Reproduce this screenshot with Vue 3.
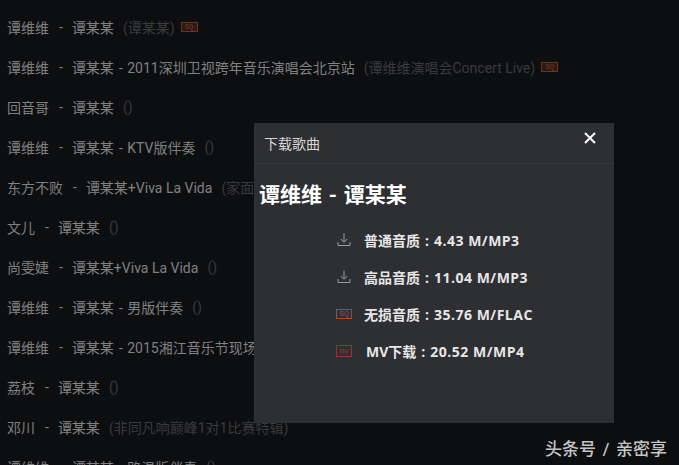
<script setup>
const rows = [
  { artist: '谭维维', title: '谭某某', album: '(谭某某)', badge: true },
  { artist: '谭维维', title: '谭某某', sub: '- 2011深圳卫视跨年音乐演唱会北京站', album: '(谭维维演唱会Concert Live)', badge: true },
  { artist: '回音哥', title: '谭某某', album: '()' },
  { artist: '谭维维', title: '谭某某', sub: '- KTV版伴奏', album: '()' },
  { artist: '东方不败', title: '谭某某+Viva La Vida', album: '(家面考古学家)' },
  { artist: '文儿', title: '谭某某', album: '()' },
  { artist: '尚雯婕', title: '谭某某+Viva La Vida', album: '()' },
  { artist: '谭维维', title: '谭某某', sub: '- 男版伴奏', album: '()' },
  { artist: '谭维维', title: '谭某某', sub: '- 2015湘江音乐节现场', album: '()' },
  { artist: '荔枝', title: '谭某某', album: '()' },
  { artist: '邓川', title: '谭某某', album: '(非同凡响巅峰1对1比赛特辑)' },
  { artist: '谭维维', title: '谭某某', sub: '- 路温版伴奏', album: '()' },
]
const options = [
  { icon: 'dl', name: '普通音质', value: '4.43 M/MP3' },
  { icon: 'dl', name: '高品音质', value: '11.04 M/MP3' },
  { icon: 'sq', name: '无损音质', value: '35.76 M/FLAC' },
  { icon: 'mv', name: 'MV下载', value: '20.52 M/MP4' },
]
</script>

<template>
  <div class="page">
    <ul class="list">
      <li v-for="(r, i) in rows" :key="i" class="row">
        <span class="artist">{{ r.artist }}</span>
        <span class="dash">-</span>
        <span class="title">{{ r.title }}</span>
        <span v-if="r.sub" class="sub">{{ r.sub }}</span>
        <span class="album">{{ r.album }}</span>
        <span v-if="r.badge" class="badge">SQ</span>
      </li>
    </ul>

    <section class="modal">
      <header class="modal-head">
        <span>下载歌曲</span>
        <svg class="close" width="12" height="12" viewBox="0 0 12 12">
          <path d="M1 1 11 11M11 1 1 11" stroke="#fff" stroke-width="2" fill="none" />
        </svg>
      </header>
      <h2 class="song">谭维维 - 谭某某</h2>
      <ul class="options">
        <li v-for="o in options" :key="o.name" class="option" :class="'opt-' + o.icon">
          <svg v-if="o.icon === 'dl'" class="icon" width="16" height="16" viewBox="0 0 16 16" fill="none" stroke="#9a9b9d" stroke-width="1">
            <path d="M8 1.5v8.5M4.8 7 8 10.3 11.2 7M2 10v3.5h12V10" />
          </svg>
          <span v-else-if="o.icon === 'sq'" class="tag tag-sq">SQ</span>
          <span v-else class="tag tag-mv">mv</span>
          <span class="label">{{ o.name }}<span class="colon">:</span><span class="value">{{ o.value }}</span></span>
        </li>
      </ul>
    </section>

    <div class="mark">头条号 / 亲密享</div>
  </div>
</template>

<style>
html, body { margin: 0; background: #0d0e10; }
</style>

<style scoped>
.page {
  position: relative;
  width: 679px;
  height: 465px;
  overflow: hidden;
  background: #0d0e10;
  font-family: Roboto, "Noto Sans CJK SC", sans-serif;
}
.list { list-style: none; margin: 0; padding: 7px 0 0 7px; }
.row {
  display: flex;
  align-items: center;
  height: 40px;
  font-size: 14px;
  color: #818181;
  white-space: nowrap;
}
.dash { margin: 0 9px 0 10px; }
.sub { margin-left: 5px; word-spacing: 1px; }
.album { margin-left: 9px; color: #3a3b3d; }
.badge {
  margin-left: 6px;
  width: 15px;
  height: 8px;
  border: 1px solid #6b3324;
  background: #2b1a14;
  color: #7a3a28;
  font: 7px/8px "Liberation Mono", monospace;
  text-align: center;
}
.modal {
  position: absolute;
  left: 254px;
  top: 123px;
  width: 360px;
  height: 300px;
  background: #2e2f32;
  color: #fff;
}
.modal-head {
  display: flex;
  justify-content: space-between;
  align-items: center;
  height: 40px;
  padding: 0 18px 0 10px;
  border-bottom: 1px solid #38393c;
  font-size: 14px;
  color: #d8d8d8;
}
.close { margin-top: -10px; }
.song {
  margin: 18px 0 0 5px;
  font-size: 21px;
  line-height: 26px;
  font-weight: 700;
  word-spacing: 1.5px;
}
.options { list-style: none; margin: 13px 0 0; padding: 0 0 0 82px; }
.option {
  display: flex;
  align-items: center;
  height: 37px;
  font-family: "Open Sans", "Noto Sans CJK SC", sans-serif;
  font-size: 14px;
  font-weight: 700;
  color: #e6e6e6;
}
.icon { width: 16px; margin-right: 12px; }
.label { white-space: nowrap; }
.colon { margin: 0 5px; }
.value { letter-spacing: 0.5px; }
.tag {
  box-sizing: border-box;
  width: 16px;
  height: 10px;
  margin-right: 12px;
  border: 1px solid #a5492f;
  color: #a5492f;
  font: 400 8px/8px "Liberation Mono", monospace;
  text-align: center;
}
.tag-mv { border-color: #9c2f2f; color: #9c2f2f; height: 12px; margin-right: 13px; line-height: 9px; }
.opt-mv .label { margin-left: 1px; }
.mark {
  position: absolute;
  right: 12px;
  bottom: 5px;
  font-size: 17px;
  font-weight: 500;
  word-spacing: 2.5px;
  color: #c4c4c4;
}
</style>
